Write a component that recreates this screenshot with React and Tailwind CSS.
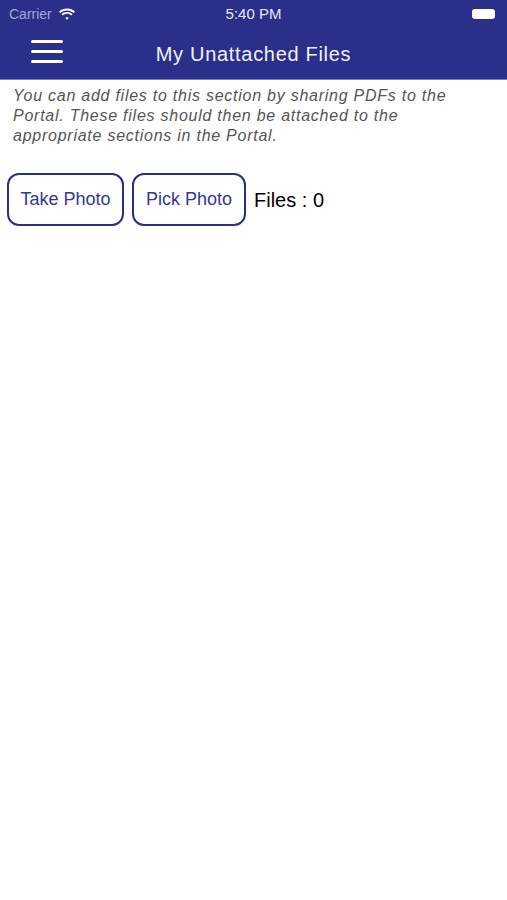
export default function App() {
  return (
    <div className="min-h-[900px] w-[507px] bg-white" style={{ fontFamily: '"Liberation Sans", Arial, sans-serif' }}>
      <header className="bg-[#2a2f8a] border-b border-[#7c80c4]">
        <div className="relative flex h-[28px] items-center px-[9px]">
          <span className="text-[14px] text-[#a3a6d6]">Carrier</span>
          <svg className="ml-[6px]" width="18" height="13" viewBox="0 0 17 12" fill="#fff">
            <path d="M8.5 2.2c2.4 0 4.6 0.9 6.3 2.5l1.3-1.3C14.1 1.5 11.4 0.4 8.5 0.4S2.9 1.5 0.9 3.4l1.3 1.3C3.9 3.1 6.1 2.2 8.5 2.2z" />
            <path d="M8.5 5.4c1.5 0 2.9 0.6 4 1.6l1.3-1.3C12.4 4.4 10.5 3.6 8.5 3.6S4.6 4.4 3.2 5.7l1.3 1.3c1.1-1 2.5-1.6 4-1.6z" />
            <path d="M8.5 8.6c0.6 0 1.1 0.2 1.6 0.6L8.5 11 6.9 9.2c0.5-0.4 1-0.6 1.6-0.6z" />
          </svg>
          <span className="absolute left-1/2 -translate-x-1/2 text-[15px] text-[#e6e7f5]">5:40 PM</span>
          <div className="ml-auto mr-[3px] h-[10px] w-[23px] rounded-[3px] bg-white" />
        </div>
        <div className="relative flex h-[51px] items-center">
          <div className="ml-[31px] flex w-[32px] flex-col gap-[7px] pb-[4px]">
            <span className="h-[3px] rounded-full bg-white" />
            <span className="h-[3px] rounded-full bg-white" />
            <span className="h-[3px] rounded-full bg-white" />
          </div>
          <h1 className="absolute left-1/2 top-[11px] -translate-x-1/2 whitespace-nowrap text-[20px] tracking-[0.7px] text-[#f1f2fa]">My Unattached Files</h1>
        </div>
      </header>

      <p className="w-[475px] pl-[13px] pt-[6px] text-[16px] italic leading-[20px] tracking-[0.75px] text-[#555555]">
        You can add files to this section by sharing PDFs to the Portal. These files should then be attached to the appropriate sections in the Portal.
      </p>

      <div className="mt-[27px] flex items-center gap-[8px] pl-[7px]">
        <button className="h-[53px] w-[117px] rounded-[12px] border-2 border-[#2a2f8a] text-[18px] text-[#34388f]">Take Photo</button>
        <button className="h-[53px] w-[114px] rounded-[12px] border-2 border-[#2a2f8a] text-[18px] text-[#34388f]">Pick Photo</button>
        <span className="text-[20px] text-black">Files : 0</span>
      </div>
    </div>
  )
}
